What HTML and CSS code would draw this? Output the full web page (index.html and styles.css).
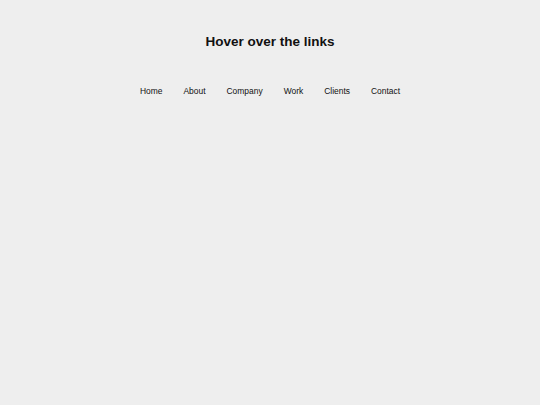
FILE: index.html
```html
<!DOCTYPE html>
<html>
<head>
<meta charset="utf-8">
<link rel="stylesheet" href="styles.css">
</head>
<body>
<h1 class="title">Hover over the links</h1>
<nav class="nav">
  <a href="#" class="link">Home</a>
  <a href="#" class="link">About</a>
  <a href="#" class="link">Company</a>
  <a href="#" class="link">Work</a>
  <a href="#" class="link">Clients</a>
  <a href="#" class="link">Contact</a>
</nav>
</body>
</html>
```
FILE: styles.css
```css
html, body {
  margin: 0;
  padding: 0;
  background: #eeeeee;
  font-family: "Liberation Sans", Arial, sans-serif;
  color: #111;
}
body {
  padding-top: 34px;
}
.title {
  margin: 0;
  font-size: 13.5px;
  line-height: 16px;
  font-weight: bold;
  text-align: center;
}
.nav {
  margin-top: 35px;
  display: flex;
  justify-content: center;
  gap: 21px;
}
.link {
  font-size: 8.45px;
  line-height: 12px;
  color: #111;
  text-decoration: none;
}
```
